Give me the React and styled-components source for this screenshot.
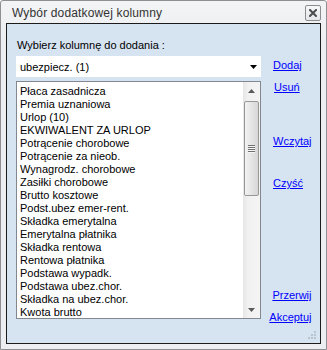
import React from 'react'
import styled, { createGlobalStyle } from 'styled-components'

const GlobalStyle = createGlobalStyle`
  html, body {
    margin: 0;
    padding: 0;
    background: #ffffff;
  }
  body {
    font-family: 'Liberation Sans', Arial, sans-serif;
  }
`

const COLUMNS = [
  'Płaca zasadnicza',
  'Premia uznaniowa',
  'Urlop (10)',
  'EKWIWALENT ZA URLOP',
  'Potrącenie chorobowe',
  'Potrącenie za nieob.',
  'Wynagrodz. chorobowe',
  'Zasiłki chorobowe',
  'Brutto kosztowe',
  'Podst.ubez emer-rent.',
  'Składka emerytalna',
  'Emerytalna płatnika',
  'Składka rentowa',
  'Rentowa płatnika',
  'Podstawa wypadk.',
  'Podstawa ubez.chor.',
  'Składka na ubez.chor.',
  'Kwota brutto',
]

const ACTIONS = [
  { label: 'Dodaj', top: 20, indent: 12 },
  { label: 'Usuń', top: 9, indent: 13 },
  { label: 'Wczytaj', top: 41, indent: 12 },
  { label: 'Czyść', top: 29, indent: 12 },
  { label: 'Przerwij', top: 99, right: true },
  { label: 'Akceptuj', top: 9, right: true },
]

const Window = styled.div`
  box-sizing: border-box;
  width: 327px;
  height: 350px;
  border: 1px solid #8d8f92;
  border-radius: 3px 3px 0 0;
  background: linear-gradient(#f3f4f6, #eceef1 40px, #eceef1);
  padding: 0 5px 5px;
  display: flex;
  flex-direction: column;
`

const TitleBar = styled.div`
  height: 22px;
  display: flex;
  align-items: center;
  justify-content: space-between;
`

const Title = styled.div`
  margin-top: 2px;
  padding-left: 6px;
  font-size: 12px;
  letter-spacing: 0.15px;
  color: #333333;
`

const CloseButton = styled.div`
  box-sizing: border-box;
  width: 16px;
  height: 16px;
  margin-top: 2px;
  border: 1px solid #8a8c90;
  border-radius: 2px;
  background: linear-gradient(#f8f8f9, #e4e6e9);
  display: flex;
  align-items: center;
  justify-content: center;
`

const Panel = styled.div`
  position: relative;
  box-sizing: border-box;
  height: 321px;
  border: 1px solid #1c1c1c;
  background: #d6e3f1;
  padding: 15px 9px 0 9px;
  display: flex;
`

const LeftColumn = styled.div`
  width: 246px;
  display: flex;
  flex-direction: column;
`

const Label = styled.div`
  font-size: 11px;
  line-height: 13px;
  padding-left: 1px;
  color: #000;
`

const Combo = styled.div`
  margin-top: 4px;
  height: 21px;
  background: #ffffff;
  display: flex;
  align-items: center;
  justify-content: space-between;
  padding: 0 4px 0 4px;
  font-size: 11px;
  color: #000;
`

const ListBox = styled.div`
  box-sizing: border-box;
  margin-top: 4px;
  width: 245px;
  height: 238px;
  border: 1px solid #828790;
  background: #ffffff;
  display: flex;
  overflow: hidden;
`

const Items = styled.div`
  flex: 1;
  padding: 3px 0 0 3px;
`

const Item = styled.div`
  font-size: 11px;
  line-height: 13px;
  color: #000;
  white-space: nowrap;
`

const ScrollBar = styled.div`
  width: 17px;
  display: flex;
  flex-direction: column;
  background: linear-gradient(to right, #e6e6e6, #f1f1f1 30%, #f4f4f4);
`

const ArrowButton = styled.div`
  height: 17px;
  display: flex;
  align-items: center;
  justify-content: center;
`

const Track = styled.div`
  flex: 1;
  display: flex;
  flex-direction: column;
  padding: 2px 1px 0;
`

const Thumb = styled.div`
  box-sizing: border-box;
  height: 95px;
  border: 1px solid #979797;
  border-radius: 2px;
  background: linear-gradient(to right, #f2f2f2, #e6e6e6 45%, #d6d6d6);
  display: flex;
  flex-direction: column;
  align-items: center;
  justify-content: center;
  gap: 1px;
`

const GripLine = styled.div`
  width: 7px;
  height: 1px;
  background: #6f6f6f;
  box-shadow: 0 1px 0 #f6f6f6;
`

const RightColumn = styled.div`
  flex: 1;
  display: flex;
  flex-direction: column;
  align-items: flex-start;
`

const ActionLink = styled.a`
  margin-top: ${p => p.$top}px;
  margin-left: ${p => (p.$right ? 0 : p.$indent)}px;
  align-self: ${p => (p.$right ? 'flex-end' : 'flex-start')};
  font-size: 11px;
  line-height: 13px;
  color: #0000ff;
  text-decoration: underline;
  cursor: pointer;
`

const SizeGrip = styled.svg`
  position: absolute;
  right: 3px;
  bottom: 3px;
`

const CloseGlyph = () => (
  <svg width="8" height="8" viewBox="0 0 8 8">
    <path d="M1 1 L7 7 M7 1 L1 7" stroke="#4a4c50" strokeWidth="2" strokeLinecap="square" />
  </svg>
)

const DownArrow = ({ color = '#000' }) => (
  <svg width="7" height="4" viewBox="0 0 7 4">
    <path d="M0 0 H7 L3.5 4 Z" fill={color} />
  </svg>
)

const UpArrow = ({ color = '#000' }) => (
  <svg width="7" height="4" viewBox="0 0 7 4">
    <path d="M0 4 H7 L3.5 0 Z" fill={color} />
  </svg>
)

const App = () => {
  return (
    <>
      <GlobalStyle />
      <Window>
        <TitleBar>
          <Title>Wybór dodatkowej kolumny</Title>
          <CloseButton>
            <CloseGlyph />
          </CloseButton>
        </TitleBar>
        <Panel>
          <LeftColumn>
            <Label>Wybierz kolumnę do dodania :</Label>
            <Combo>
              <span>ubezpiecz. (1)</span>
              <DownArrow />
            </Combo>
            <ListBox>
              <Items>
                {COLUMNS.map(name => (
                  <Item key={name}>{name}</Item>
                ))}
              </Items>
              <ScrollBar>
                <ArrowButton>
                  <UpArrow color="#5a5a5a" />
                </ArrowButton>
                <Track>
                  <Thumb>
                    <GripLine />
                    <GripLine />
                    <GripLine />
                    <GripLine />
                  </Thumb>
                </Track>
                <ArrowButton>
                  <DownArrow color="#5a5a5a" />
                </ArrowButton>
              </ScrollBar>
            </ListBox>
          </LeftColumn>
          <RightColumn>
            {ACTIONS.map(a => (
              <ActionLink key={a.label} $top={a.top} $indent={a.indent} $right={a.right}>
                {a.label}
              </ActionLink>
            ))}
          </RightColumn>
          <SizeGrip width="9" height="9" viewBox="0 0 9 9">
            {[[6, 0], [3, 3], [6, 3], [0, 6], [3, 6], [6, 6]].map(([x, y]) => (
              <rect key={`${x}-${y}`} x={x} y={y} width="2" height="2" fill="#b7c3cf" />
            ))}
          </SizeGrip>
        </Panel>
      </Window>
    </>
  )
}

export default App
